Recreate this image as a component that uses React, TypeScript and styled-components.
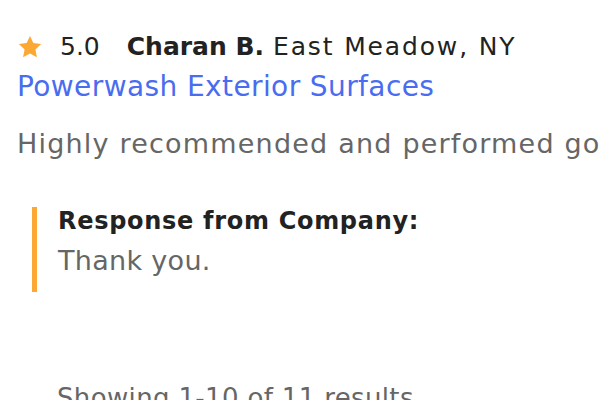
import React from "react";
import styled, { createGlobalStyle } from "styled-components";

const Global = createGlobalStyle`
  html, body { margin: 0; padding: 0; background: #fff; overflow: hidden; }
  body { font-family: "DejaVu Sans", "Noto Sans", sans-serif; }
`;

const Page = styled.div`
  width: 600px;
  height: 400px;
  overflow: hidden;
  padding: 30px 0 0 17px;
  box-sizing: border-box;
`;

const Header = styled.div`
  display: flex;
  align-items: center;
  height: 34px;
  line-height: 34px;
  font-size: 25px;
  color: #222;
  white-space: nowrap;
`;

const Star = styled.svg`
  width: 26px;
  height: 26px;
  margin-right: 17px;
  flex: none;
`;

const Rating = styled.span`
  font-weight: 500;
  margin-right: 27px;
`;

const Name = styled.span`
  font-weight: 700;
  margin-right: 9px;
`;

const Location = styled.span`
  font-weight: 400;
  letter-spacing: 1.85px;
`;

const Service = styled.a`
  display: block;
  margin-top: 5px;
  font-size: 28px;
  line-height: 36px;
  letter-spacing: 0.4px;
  color: #4a6cf0;
  text-decoration: none;
  white-space: nowrap;
`;

const Body = styled.p`
  margin: 22px 0 0 0;
  font-size: 27px;
  line-height: 34px;
  letter-spacing: 1.2px;
  color: #666;
  white-space: nowrap;
`;

const Quote = styled.blockquote`
  margin: 46px 0 0 15px;
  padding: 0 0 0 21px;
  border-left: 5px solid #fba834;
  height: 85px;
  box-sizing: border-box;
`;

const QuoteTitle = styled.div`
  font-size: 24px;
  font-weight: 700;
  letter-spacing: 0.7px;
  color: #222;
  line-height: 28px;
`;

const QuoteText = styled.div`
  margin-top: 10px;
  font-size: 27px;
  letter-spacing: 0.3px;
  color: #666;
  line-height: 32px;
`;

const Results = styled.div`
  margin: 91px 0 0 40px;
  font-size: 26px;
  line-height: 30px;
  letter-spacing: 0.35px;
  color: #666;
  white-space: nowrap;
`;

export default function App() {
  return (
    <>
      <Global />
      <Page>
        <Header>
          <Star viewBox="0 0 24 24">
            <path
              d="M12 1.8l3.1 6.6 7.2.9-5.3 5 1.4 7.1L12 17.9l-6.4 3.5 1.4-7.1-5.3-5 7.2-.9z"
              fill="#fba834"
            />
          </Star>
          <Rating>5.0</Rating>
          <Name>Charan B.</Name>
          <Location>East Meadow, NY</Location>
        </Header>
        <Service href="#">Powerwash Exterior Surfaces</Service>
        <Body>Highly recommended and performed good work.</Body>
        <Quote>
          <QuoteTitle>Response from Company:</QuoteTitle>
          <QuoteText>Thank you.</QuoteText>
        </Quote>
        <Results>Showing 1-10 of 11 results</Results>
      </Page>
    </>
  );
}
